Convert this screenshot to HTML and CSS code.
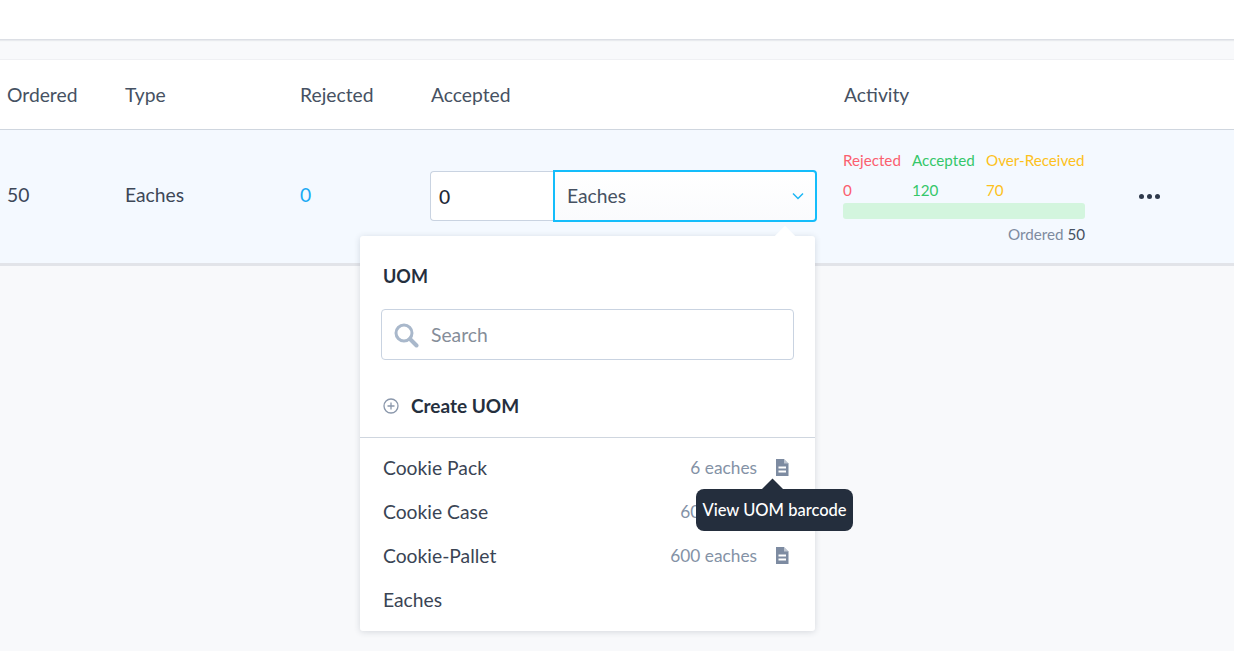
FILE: index.html
```html
<!DOCTYPE html>
<html lang="en">
<head>
<meta charset="utf-8">
<title>UOM</title>
<link rel="stylesheet" href="styles.css">
</head>
<body>
<div class="topbar"></div>
<section class="table">
  <div class="cols head">
    <div>Ordered</div>
    <div>Type</div>
    <div>Rejected</div>
    <div>Accepted</div>
    <div>Activity</div>
    <div></div>
  </div>
  <div class="cols row">
    <div>50</div>
    <div>Eaches</div>
    <div class="link">0</div>
    <div class="qty">
      <div class="qty-input">0</div>
      <div class="qty-select">
        <span class="select-value">Eaches</span>
        <svg class="chev" width="12" height="8" viewBox="0 0 12 8"><path d="M1 1.500l5 5 5-5" fill="none" stroke="#1cb7f5" stroke-width="1.500"/></svg>
      </div>
    </div>
    <div class="activity">
      <div class="act-grid">
        <span class="red">Rejected</span><span class="green">Accepted</span><span class="amber">Over-Received</span>
        <span class="red">0</span><span class="green">120</span><span class="amber">70</span>
      </div>
      <div class="bar"></div>
      <div class="ordered">Ordered <b>50</b></div>
    </div>
    <div class="dots"><i></i><i></i><i></i></div>
  </div>
</section>

<div class="popup">
  <div class="arrow"></div>
  <h3 class="pop-title">UOM</h3>
  <div class="search">
    <svg width="26" height="26" viewBox="0 0 26 26"><circle cx="11" cy="11" r="8" fill="none" stroke="#a9b8cb" stroke-width="3"/><path d="M17 17l6.500 6.500" stroke="#a9b8cb" stroke-width="4" stroke-linecap="round"/></svg>
    <span>Search</span>
  </div>
  <div class="create">
    <svg width="16" height="16" viewBox="0 0 16 16"><circle cx="8" cy="8" r="7" fill="none" stroke="#8a97ab" stroke-width="1.300"/><path d="M8 4.500v7M4.500 8h7" stroke="#8a97ab" stroke-width="1.300"/></svg>
    <span>Create UOM</span>
  </div>
  <ul class="list">
    <li><span>Cookie Pack</span><span class="qty-note">6 eaches</span><svg class="doc" width="14" height="17" viewBox="0 0 14 17"><path d="M1 0h8l4.500 4.500V17H1z" fill="#7d8ba1"/><path d="M3.500 8.500h7.500M3.500 12.500h7.500" stroke="#fff" stroke-width="1.800"/><path d="M9 0l4.500 4.500H9z" fill="#fff" opacity=".5"/></svg></li>
    <li><span>Cookie Case</span><span class="qty-note">60 eaches</span><svg class="doc" width="14" height="17" viewBox="0 0 14 17"><path d="M1 0h8l4.500 4.500V17H1z" fill="#7d8ba1"/><path d="M3.500 8.500h7.500M3.500 12.500h7.500" stroke="#fff" stroke-width="1.800"/><path d="M9 0l4.500 4.500H9z" fill="#fff" opacity=".5"/></svg></li>
    <li><span>Cookie-Pallet</span><span class="qty-note">600 eaches</span><svg class="doc" width="14" height="17" viewBox="0 0 14 17"><path d="M1 0h8l4.500 4.500V17H1z" fill="#7d8ba1"/><path d="M3.500 8.500h7.500M3.500 12.500h7.500" stroke="#fff" stroke-width="1.800"/><path d="M9 0l4.500 4.500H9z" fill="#fff" opacity=".5"/></svg></li>
    <li><span>Eaches</span></li>
  </ul>
</div>

<div class="tooltip">View UOM barcode</div>
</body>
</html>
```
FILE: styles.css
```css
* { box-sizing: border-box; }
html, body { margin: 0; height: 651px; overflow: hidden; }
body {
  background: #f8f9fb;
  font-family: "Lato", "Liberation Sans", sans-serif;
  color: #3d4757;
  font-size: 19.3px;
  position: relative;
}
.topbar {
  height: 40px;
  background: #fff;
  border-bottom: 1px solid #dcdfe5;
  box-shadow: 0 1px 1px #e8eaee;
}
.table { margin-top: 19px; }
.cols {
  display: grid;
  grid-template-columns: 118px 175px 131px 413px 295px 40px;
  padding-left: 7px;
  align-items: center;
}
.head {
  height: 71px;
  background: #fff;
  border-top: 1px solid #eff0f3;
  border-bottom: 1px solid #cfd6df;
  color: #465162;
}
.row {
  height: 136px;
  padding-bottom: 5px;
  background: #f4f9ff;
  border-bottom: 3px solid #e2e4e9;
}
.link { color: #1aa9f4; }
.qty { display: flex; width: 387px; height: 52px; margin: 4px 0 0 -1px; align-items: center; }
.qty-input {
  width: 123px;
  height: 50px;
  background: #fff;
  border: 1px solid #c9d3e1;
  border-right: 0;
  border-radius: 4px 0 0 4px;
  padding: 0 8px;
  line-height: 49px;
  color: #1f2937;
  font-weight: 500;
}
.qty-select {
  flex: 1;
  height: 52px;
  background: linear-gradient(#fff, #fafbfd);
  border: 2px solid #14bdfb;
  border-radius: 0 4px 4px 0;
  padding: 0 12px;
  display: flex;
  align-items: center;
  justify-content: space-between;
  color: #465162;
}
.select-value { margin-bottom: 2px; }
.chev { margin-right: -1px; }
.activity { width: 242px; margin: 6px 0 0 -1px; font-size: 15.200px; }
.act-grid {
  display: grid;
  grid-template-columns: 69px 74px auto;
  row-gap: 10px;
  line-height: 20px;
}
.red { color: #fb5f6f; }
.green { color: #35c76a; }
.amber { color: #fdc11c; }
.bar {
  height: 16px;
  margin-top: 3px;
  background: #d3f5de;
  border-radius: 3px;
}
.ordered {
  margin-top: 5px;
  text-align: right;
  color: #7e8ba0;
  line-height: 20px;
}
.ordered b { font-weight: 400; color: #465162; }
.dots { display: flex; gap: 3px; margin: 4px 0 0; }
.dots i { width: 5px; height: 5px; border-radius: 50%; background: #2f3a4c; }

.popup {
  position: absolute;
  left: 360px;
  top: 236px;
  width: 455px;
  height: 395px;
  background: #fff;
  border-radius: 3px;
  box-shadow: 0 1px 6px rgba(40, 50, 70, .16);
  display: flex;
  flex-direction: column;
}
.arrow {
  position: absolute;
  right: 21px;
  top: -9px;
  width: 18px;
  height: 18px;
  background: #fff;
  transform: rotate(45deg) scale(.8);
}
.pop-title {
  margin: 28px 0 0 23px;
  font-size: 18px;
  line-height: 24px;
  font-weight: 700;
  color: #252f3e;
}
.search {
  margin: 21px 21px 0;
  height: 51px;
  border: 1px solid #c9d3e1;
  border-radius: 4px;
  display: flex;
  align-items: center;
  gap: 12px;
  padding-left: 11px;
  color: #858d99;
  line-height: 22px;
}
.create {
  margin: 34px 0 0 23px;
  display: flex;
  align-items: center;
  gap: 12px;
  font-weight: 700;
  font-size: 19px;
  line-height: 24px;
  color: #252f3e;
}
.list {
  list-style: none;
  margin: 19px 0 0;
  padding: 7px 26px 0 23px;
  border-top: 1px solid #cfd6df;
}
.list li {
  height: 44px;
  display: flex;
  align-items: center;
  color: #3a4454;
}
.list li > span:first-child { flex: 1; }
.qty-note { color: #8492a6; font-size: 17.300px; margin-right: 18px; }
.doc { display: block; }

.tooltip {
  position: absolute;
  left: 696px;
  top: 489px;
  width: 157px;
  height: 42px;
  background: #242e3d;
  border-radius: 8px;
  color: #fff;
  font-size: 16.500px;
  font-weight: 500;
  line-height: 42px;
  text-align: center;
  white-space: nowrap;
}
.tooltip::before {
  content: "";
  position: absolute;
  left: 68px;
  top: -7px;
  width: 17px;
  height: 17px;
  background: #242e3d;
  transform: rotate(45deg);
}
```
